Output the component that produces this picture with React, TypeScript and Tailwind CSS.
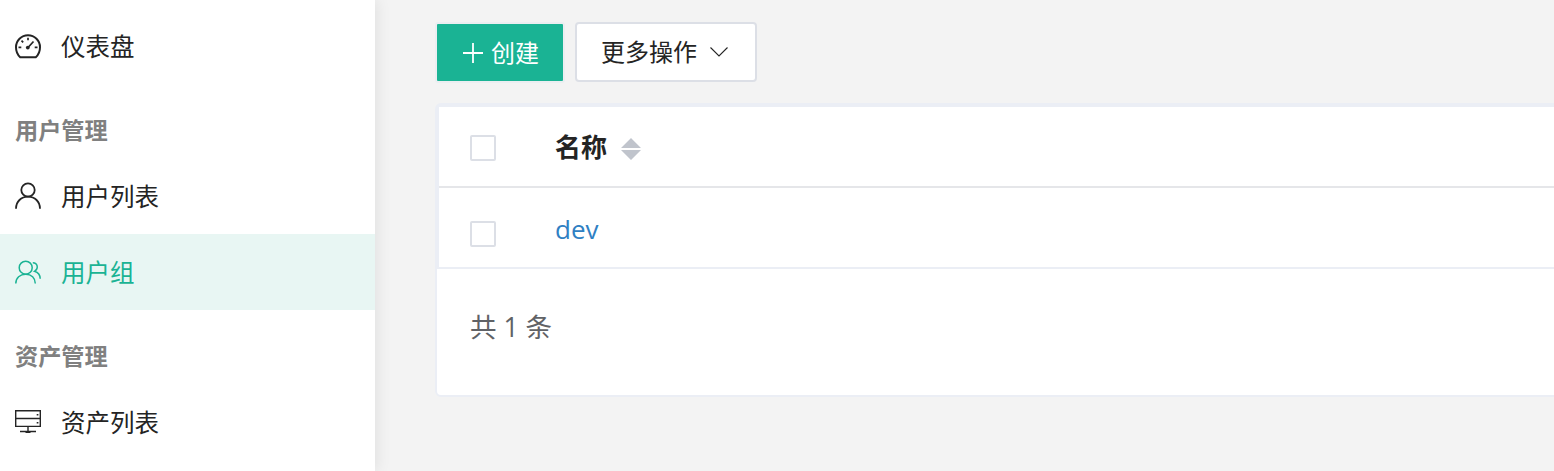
import type { ReactNode } from "react";

const line = { fill: "none", stroke: "currentColor", strokeWidth: 1.8 };

function GaugeIcon() {
  return (
    <svg viewBox="0 0 28 28" className="size-7" {...line} strokeWidth={2}>
      <path d="M6.200 25.200C3.600 22.900 2 19.500 2 15.300a12 12 0 0 1 24 0c0 4.200-1.600 7.600-4.200 9.900z" strokeLinejoin="round" />
      <path d="M14 5.800v2.400M7.500 8.700l1.700 1.700M4.500 15.300h2.800M20.700 15.300h2.800M14 15.500l5.500-6" strokeWidth="1.700" />
      <circle cx="13.800" cy="15.600" r="1.900" fill="currentColor" stroke="none" />
    </svg>
  );
}

function UserIcon() {
  return (
    <svg viewBox="0 0 28 28" className="size-7" {...line}>
      <circle cx="14" cy="8" r="6.700" />
      <path d="M2 26.700C2 19.500 7.200 14.700 14 14.700S26 19.500 26 26.700" />
    </svg>
  );
}

function UsersIcon() {
  return (
    <svg viewBox="0 0 28 28" className="size-7" {...line} strokeWidth={1.5}>
      <circle cx="11.700" cy="9.700" r="6.500" />
      <path d="M1.800 25.500C1.800 20 6 16.200 11.700 16.200S21.300 20 21.300 25.500M18.800 4.700c4.800 0 6.200 5.800 1.700 8.600 3.400 1.200 5.700 4.200 5.700 7.400" />
    </svg>
  );
}

function ServerIcon() {
  return (
    <svg viewBox="0 0 28 28" className="size-7" {...line} strokeWidth={1.400}>
      <path d="M1.700 2.700h24.600v15.700H1.700zM1.700 10.500h24.600M14 18.400v5.600M6 23.500h16" />
      <path d="M22.700 6.700h1.700M22.700 14.700h1.700M11.500 24.400h5" />
    </svg>
  );
}

function NavItem({ icon, children, active = false }: { icon: ReactNode; children: ReactNode; active?: boolean }) {
  return (
    <a
      className={
        active
          ? "flex h-[76px] items-center gap-[19px] bg-[#e8f6f3] pl-3.5 text-[24.5px] text-[#1ab394]"
          : "flex h-[76px] items-center gap-[19px] pl-3.5 text-[24.5px] text-[#242424]"
      }
    >
      {icon}
      <span className="pt-0.5">{children}</span>
    </a>
  );
}

function NavHeading({ children }: { children: ReactNode }) {
  return <h2 className="flex h-[74px] items-center pt-5 pl-[15px] text-[23.2px] font-bold text-[#808080]">{children}</h2>;
}

function Checkbox() {
  return <span role="checkbox" aria-checked="false" className="size-[26px] rounded-[2px] border-2 border-[#dcdfe6] bg-white" />;
}

export default function App() {
  return (
    <div className="flex h-[471px] overflow-hidden bg-[#f3f3f3] font-['Open_Sans','Noto_Sans_CJK_SC',sans-serif] leading-none">
      <nav className="z-10 w-[375px] shrink-0 bg-white pt-2 shadow-[2px_0_14px_rgba(0,0,0,0.08)]">
        <NavItem icon={<GaugeIcon />}>仪表盘</NavItem>
        <NavHeading>用户管理</NavHeading>
        <NavItem icon={<UserIcon />}>用户列表</NavItem>
        <NavItem icon={<UsersIcon />} active>用户组</NavItem>
        <NavHeading>资产管理</NavHeading>
        <NavItem icon={<ServerIcon />}>资产列表</NavItem>
      </nav>
      <main className="min-w-0 flex-1 pt-[22px] pl-[60px]">
        <div className="flex gap-2.5 text-2xl">
          <button className="flex h-[61px] w-[130px] items-center rounded-[3px] border-2 border-[#ebeef1] bg-[#1ab394] pl-[26px] text-white">
            <svg viewBox="0 0 20 20" className="mr-2 size-5" {...line}>
              <path d="M0 10h20M10 0v20" />
            </svg>
            创建
          </button>
          <button className="flex h-[60px] w-[182px] items-center rounded-[4px] border-2 border-[#dcdfe6] bg-white pl-6 text-[#242424]">
            更多操作
            <svg viewBox="0 0 18 10" className="ml-[13px] h-2.5 w-[18px]" {...line} strokeWidth={1.1}>
              <path d="M.5.500 9 9 17.500.500" />
            </svg>
          </button>
        </div>
        <section className="mt-5 h-[294px] w-[1180px] rounded-[6px] border-2 border-[#ebeef5] bg-white">
          <div className="border-t-2 border-l-2 border-[#ebeef5]">
            <div className="flex h-[81px] items-center border-b-2 border-[#e5e6e9] pt-0.5 pl-[31px]">
              <Checkbox />
              <span className="mb-0.5 ml-[59px] text-[26px] font-bold text-[#242424]">名称</span>
              <svg viewBox="0 0 20 22" className="mt-0.5 ml-3.5 h-[22px] w-5 text-[#c0c4cc]" fill="currentColor">
                <path d="M0 10 10 0l10 10zM0 12h20L10 22z" />
              </svg>
            </div>
            <div className="flex h-[81px] items-center border-b-2 border-[#ebeef5] pt-[13px] pl-[31px]">
              <Checkbox />
              <a className="mb-2.5 ml-[59px] text-[26px] text-[#2f80c3]">dev</a>
            </div>
          </div>
          <div className="pt-[45px] pl-[33px] text-[26.5px] text-[#606266]">共 1 条</div>
        </section>
      </main>
    </div>
  );
}
